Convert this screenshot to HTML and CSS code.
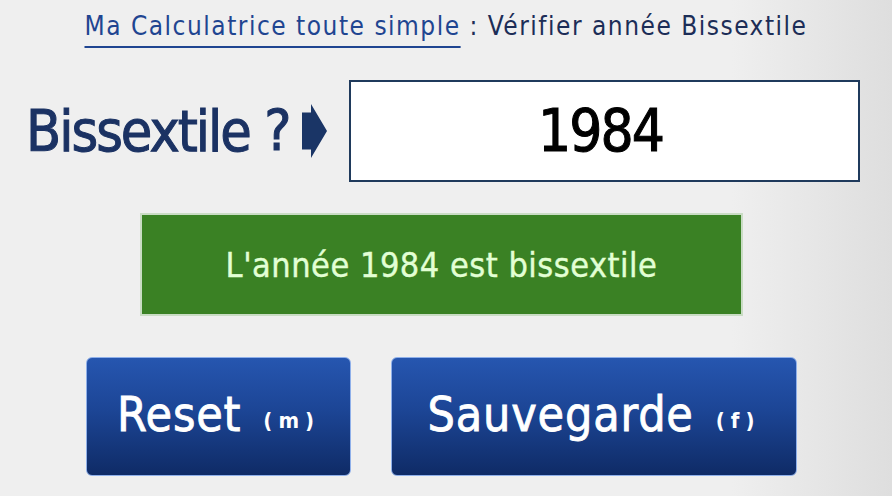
FILE: index.html
```html
<!DOCTYPE html>
<html lang="fr">
<head>
<meta charset="utf-8">
<title>Vérifier année Bissextile</title>
<link rel="stylesheet" href="styles.css">
</head>
<body>
<div class="page">
  <h1 class="title"><a class="title-link" href="#">Ma Calculatrice toute simple</a> : Vérifier année Bissextile</h1>
  <div class="input-row">
    <label class="label" for="year">Bissextile ?</label>
    <svg class="arrow" width="25" height="54" viewBox="0 0 25 54" aria-hidden="true">
      <path d="M0 8.5 H9 V0 L25 27 L9 54 V45.5 H0 Z" fill="#1a3566"/>
    </svg>
    <div class="input-box" id="year">1984</div>
  </div>
  <div class="result">L'année 1984 est bissextile</div>
  <div class="buttons">
    <button class="btn btn-reset">Reset<span class="key">(m)</span></button>
    <button class="btn btn-save">Sauvegarde<span class="key">(f)</span></button>
  </div>
</div>
</body>
</html>
```
FILE: styles.css
```css
html, body {
  margin: 0;
  padding: 0;
}
body {
  width: 892px;
  height: 496px;
  overflow: hidden;
  background: linear-gradient(to right, #efefef 0%, #efefef 82%, #dedede 100%);
  font-family: "DejaVu Sans", sans-serif;
  font-stretch: condensed;
}
.page {
  padding-top: 9px;
}
.title {
  margin: 0;
  text-align: center;
  font-size: 26px;
  letter-spacing: 1.5px;
  line-height: 34px;
  font-weight: normal;
  color: #1c2d57;
  white-space: nowrap;
}
.title-link {
  color: #1f4591;
  text-decoration: underline;
  text-decoration-thickness: 2px;
  text-underline-offset: 11px;
}
.input-row {
  margin-top: 37px;
  display: grid;
  grid-template-columns: 276px 25px 533px;
  align-items: center;
  padding-left: 26px;
}
.label {
  font-size: 57px;
  letter-spacing: -2px;
  line-height: 60px;
  color: #1b3263;
  white-space: nowrap;
  -webkit-text-stroke: 1px #1b3263;
}
.arrow {
  display: block;
}
.input-box {
  margin-left: 22px;
  width: 511px;
  height: 102px;
  box-sizing: border-box;
  border: 2px solid #1f3a5c;
  background: #ffffff;
  display: flex;
  align-items: center;
  justify-content: center;
  font-size: 58px;
  letter-spacing: -2px;
  color: #000;
  padding-right: 8px;
  -webkit-text-stroke: 1px #000;
}
.result {
  margin-top: 31px;
  margin-left: 140px;
  width: 603px;
  height: 103px;
  box-sizing: border-box;
  border: 2px solid #c9dcc4;
  background: #3a8124;
  color: #e2ffd4;
  font-size: 34px;
  letter-spacing: 0.5px;
  display: flex;
  align-items: center;
  justify-content: center;
  white-space: nowrap;
  -webkit-text-stroke: 0.4px #e2ffd4;
}
.buttons {
  margin-top: 41px;
  display: flex;
  gap: 40px;
  padding-left: 86px;
}
.btn {
  height: 119px;
  box-sizing: border-box;
  border: 1px solid #8fb0ea;
  border-radius: 6px;
  background: linear-gradient(to bottom, #2656b0 0%, #1c4595 45%, #0f2b66 100%);
  color: #ffffff;
  font-family: inherit;
  font-stretch: condensed;
  font-size: 48px;
  letter-spacing: 0.8px;
  display: flex;
  align-items: baseline;
  justify-content: center;
  padding: 28px 0 0;
  cursor: pointer;
  white-space: nowrap;
  -webkit-text-stroke: 0.8px #ffffff;
}
.btn-reset {
  width: 265px;
}
.btn-save {
  width: 406px;
}
.key {
  font-size: 22px;
  font-weight: bold;
  letter-spacing: 6px;
  margin-left: 22px;
  position: relative;
  top: -3px;
  -webkit-text-stroke: 0;
}
```
